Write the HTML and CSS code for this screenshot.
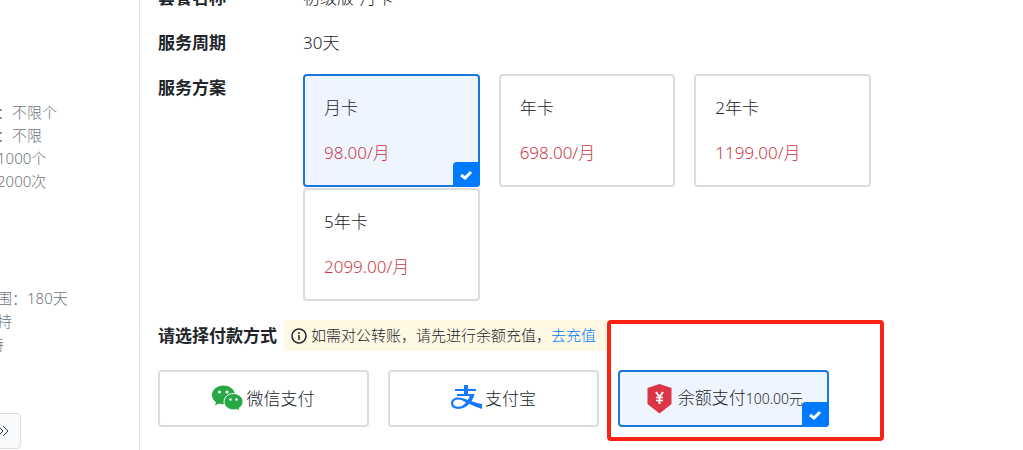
FILE: index.html
```html
<!DOCTYPE html>
<html lang="zh-CN">
<head>
    <meta charset="UTF-8">
    <meta name="viewport" content="width=device-width, initial-scale=1.0">
    <title>套餐购买</title>
    <link rel="stylesheet" href="styles.css">
</head>
<body>

    <div class="page">
        <aside class="sidebar">
            <ul class="quota">
                <li>：不限个</li>
                <li>：不限</li>
                <li>1000个</li>
                <li>2000次</li>
            </ul>
            <ul class="quota">
                <li>围：180天</li>
                <li>持</li>
                <li class="cut">持</li>
            </ul>
            <button type="button" class="more" aria-label="更多">
                <svg viewBox="0 0 12 12"><path d="M1 1l5 5-5 5M6 1l5 5-5 5"/></svg>
            </button>
        </aside>

        <main class="main">
            <div class="row">
                <div class="name">套餐名称</div>
                <div class="value">初级版-月卡</div>
            </div>
            <div class="row">
                <div class="name">服务周期</div>
                <div class="value">30天</div>
            </div>
            <div class="row">
                <div class="name">服务方案</div>
                <div class="value plans">
                    <label class="option plan">
                        <input type="radio" name="plan" checked>
                        <span>月卡</span>
                        <span class="price">98.00/月</span>
                        <span class="tick"><svg viewBox="0 0 14 12"><path d="M2 6l4 3 6-6"/></svg></span>
                    </label>
                    <label class="option plan">
                        <input type="radio" name="plan">
                        <span>年卡</span>
                        <span class="price">698.00/月</span>
                        <span class="tick"><svg viewBox="0 0 14 12"><path d="M2 6l4 3 6-6"/></svg></span>
                    </label>
                    <label class="option plan">
                        <input type="radio" name="plan">
                        <span>2年卡</span>
                        <span class="price">1199.00/月</span>
                        <span class="tick"><svg viewBox="0 0 14 12"><path d="M2 6l4 3 6-6"/></svg></span>
                    </label>
                    <label class="option plan">
                        <input type="radio" name="plan">
                        <span>5年卡</span>
                        <span class="price">2099.00/月</span>
                        <span class="tick"><svg viewBox="0 0 14 12"><path d="M2 6l4 3 6-6"/></svg></span>
                    </label>
                </div>
            </div>

            <div class="pay-head">
                <div class="name">请选择付款方式</div>
                <div class="notice">
                    <svg viewBox="0 0 16 16"><circle cx="8" cy="8" r="7"/><path d="M8 7v5M8 4v2"/></svg>
                    <span>如需对公转账，请先进行余额充值，<a href="#">去充值</a></span>
                </div>
            </div>

            <div class="pays">
                <label class="option pay">
                    <input type="radio" name="pay">
                    <svg class="icon" viewBox="0 0 31 31">
                        <path fill="#28a745" d="M11.500 2.500C5 2.500 0 6.800 0 12c0 3 1.500 5.500 4 7.200L3 22.500l4-2c1.500.5 3 .7 5 .6 4-1 11-10 11-11-1.500-4.400-6-7.600-11.500-7.600z"/>
                        <path fill="#28a745" stroke="#fff" d="M21.500 10.500c-5.200 0-9.500 3.700-9.500 8.200s4.300 8.200 9.500 8.200c1.200 0 2.300-.2 3.300-.5l3 1.800-.7-3c2.400-1.500 3.900-3.800 3.900-6.500 0-4.500-4.300-8.200-9.500-8.200z"/>
                        <g fill="#fff"><circle cx="7.500" cy="9" r="1.500"/><circle cx="15" cy="9" r="1.500"/><circle cx="18.500" cy="16.500" r="1.200"/><circle cx="24.500" cy="16.500" r="1.200"/></g>
                    </svg>
                    <span>微信支付</span>
                    <span class="tick"><svg viewBox="0 0 14 12"><path d="M2 6l4 3 6-6"/></svg></span>
                </label>
                <label class="option pay">
                    <input type="radio" name="pay">
                    <svg class="icon" viewBox="0 0 31 31">
                        <path fill="#1677ff" d="M13 2h4v4h8v2h-8v3h6.500c-.6 2.600-1.600 5-3 7.200 3.300 1.100 6.500 2 10.500 2.800v5c-4.500-1.300-9-3.400-12.800-5.200C15.500 24 11.500 26 7.500 26 3.300 26 0 24 0 20.300 0 17 2.800 14.500 7 14.500c3.300 0 6.500 1.200 9.800 2.400.9-1.300 1.600-2.600 2-4H6v-2h7V8H4V6h9zM7 16.500c-3 0-4.800 1.500-4.800 3.700 0 2.300 2 3.500 4.800 3.500 3.200 0 5.800-1.700 8-4.300-2.800-1.600-5.300-2.900-8-2.900z"/>
                    </svg>
                    <span>支付宝</span>
                    <span class="tick"><svg viewBox="0 0 14 12"><path d="M2 6l4 3 6-6"/></svg></span>
                </label>
                <label class="option pay marked">
                    <input type="radio" name="pay" checked>
                    <svg class="icon" viewBox="0 0 31 31">
                        <path fill="#dc3545" d="M15.500 1l12 4v16l-12 9.500-12-9.500V5z"/>
                        <path fill="none" stroke="#fff" stroke-width="2" d="M12 9l3.500 5L19 9M15.500 13v8"/>
                        <path fill="none" stroke="#fff" stroke-width="1.500" d="M12 14.500h7M12 17.500h7"/>
                    </svg>
                    <span>余额支付<small>100.00元</small></span>
                    <span class="tick"><svg viewBox="0 0 14 12"><path d="M2 6l4 3 6-6"/></svg></span>
                </label>
            </div>
        </main>
    </div>

</body>
</html>
```
FILE: styles.css
```css
* {
    box-sizing: border-box;
}
body {
    margin: 0;
    background: #fff;
    color: #212529;
    font-family: "Noto Sans", "Noto Sans CJK SC", sans-serif;
    font-size: 17px;
    font-weight: 300;
    line-height: 28px;
    overflow: hidden;
}
.page {
    display: flex;
    min-height: 100vh;
}
.sidebar {
    flex: 0 0 140px;
    overflow: hidden;
    padding-top: 101px;
    border-right: 1px solid #dee2e6;
}
.quota {
    list-style: none;
    margin: 0 0 94px -3px;
    padding: 0;
    color: #6c757d;
    font-size: 15px;
    line-height: 23px;
}
.quota + .quota {
    margin-bottom: 57px;
}
.quota .cut {
    text-indent: -8px;
}
.more {
    display: flex;
    align-items: center;
    justify-content: flex-end;
    width: 32px;
    height: 36px;
    margin-left: -11px;
    padding: 0 11px;
    border: 1px solid #dadce0;
    border-radius: 4px;
    background: #f8f9fa;
    cursor: pointer;
}
.more svg {
    flex: none;
    width: 12px;
    height: 12px;
    fill: none;
    stroke: #343a40;
}
.main {
    flex: 1;
    margin-top: -16px;
    padding: 0 152px 0 18px;
}
.row {
    display: flex;
    margin-bottom: 17px;
}
.row .name {
    flex: 0 0 145px;
}
.name {
    font-weight: bold;
}
.value {
    flex: 1;
}
.plans {
    display: grid;
    grid-template-columns: repeat(3, 1fr);
    gap: 1px 19px;
}
.option {
    position: relative;
    display: flex;
    border: 2px solid #dcdcdc;
    border-radius: 4px;
    cursor: pointer;
}
.option input {
    position: absolute;
    opacity: 0;
}
.option:has(input:checked) {
    border-color: #1878e0;
    background: #eff5ff;
}
.plan {
    flex-direction: column;
    gap: 17px;
    padding: 18px 19px;
}
.price {
    color: #c93a48;
}
.tick {
    display: none;
    position: absolute;
    right: -2px;
    bottom: -2px;
    width: 27px;
    height: 25px;
    align-items: center;
    justify-content: center;
    border-radius: 4px 0 4px 0;
    background: #007bff;
}
.option input:checked ~ .tick {
    display: flex;
}
.tick svg {
    width: 14px;
    height: 12px;
    fill: none;
    stroke: #fff;
    stroke-width: 3;
}
.pay-head {
    display: flex;
    align-items: center;
    gap: 7px;
    margin: 19px 0;
    white-space: nowrap;
}
.notice {
    display: flex;
    align-items: center;
    gap: 4px;
    padding: 4px 12px 4px 7px;
    border-radius: 4px;
    background: #fff9e3;
    font-size: 15px;
    line-height: 23px;
}
.notice svg {
    width: 16px;
    height: 16px;
    fill: none;
    stroke: #212529;
    stroke-width: 1.5;
}
.notice a {
    color: #007bff;
    text-decoration: none;
}
.pays {
    display: grid;
    grid-template-columns: repeat(3, 1fr);
    gap: 19px;
    width: 94.1%;
}
.pay {
    align-items: center;
    justify-content: center;
    gap: 3px;
    padding: 11px 0;
    white-space: nowrap;
}
.pay .icon {
    width: 31px;
    height: 31px;
}
.pay small {
    font-size: 14px;
}
/* red frame around the selected payment */
.marked::after {
    content: "";
    position: absolute;
    top: -52px;
    right: -57px;
    bottom: -16px;
    left: -13px;
    border: 4px solid #f92314;
    border-radius: 4px;
    pointer-events: none;
}
```
